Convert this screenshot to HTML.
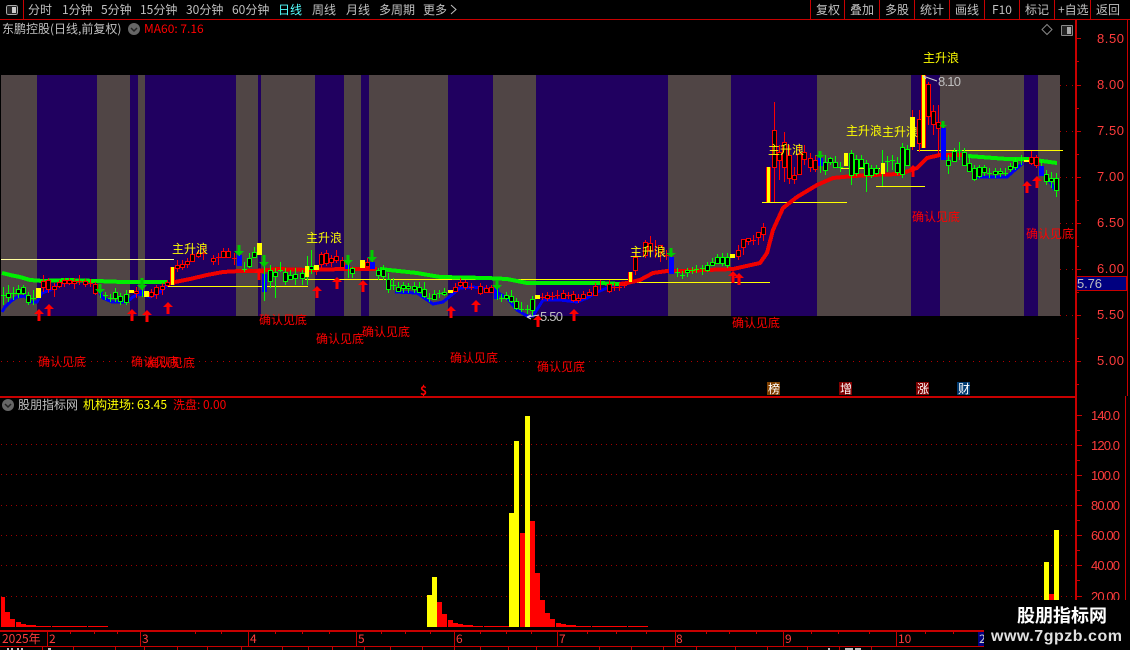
<!DOCTYPE html>
<html><head><meta charset="utf-8"><style>
html,body{margin:0;padding:0;background:#000;overflow:hidden}
svg{display:block}
text{font-family:"WenQuanYi Zen Hei","Noto Sans CJK SC",sans-serif;font-size:12px}
.n{font-family:"Liberation Sans",sans-serif;font-size:13px}
.g{fill:#c0c0c0}.r{fill:#f00}.y{fill:#ff0}.a{fill:#ff3c3c}
</style></head><body>
<svg width="1130" height="650" viewBox="0 0 1130 650" xmlns="http://www.w3.org/2000/svg">
<rect width="1130" height="650" fill="#000"/>
<g shape-rendering="crispEdges">
<path fill="#504545" d="M1 75H37V316H1zM97 75H130V316H97zM138 75H145V316H138zM236 75H258V316H236zM261 75H315V316H261zM344 75H361V316H344zM369 75H448V316H369zM493 75H536V316H493zM668 75H731V316H668zM817 75H911V316H817zM940 75H1024V316H940zM1038 75H1060V316H1038z"/>
<path fill="#200060" d="M37 75H97V316H37zM130 75H138V316H130zM145 75H236V316H145zM258 75H261V316H258zM315 75H344V316H315zM361 75H369V316H361zM448 75H493V316H448zM536 75H668V316H536zM731 75H817V316H731zM911 75H940V316H911zM1024 75H1038V316H1024z"/>
<path stroke="#b00000" stroke-dasharray="1 5" fill="none" d="M1 361.5H1075M1060 85.5H1075M1060 131.5H1075M1060 177.5H1075M1060 223.5H1075M1060 269.5H1075M1060 315.5H1075"/>
<path stroke="#a00000" stroke-dasharray="1 4" fill="none" d="M1 444.5H1075M1 474.5H1075M1 505.5H1075M1 535.5H1075M1 565.5H1075M1 596.5H1075"/>
<path stroke="#c80000" fill="none" d="M0 19.5H1130M23.5 0V20M810.5 0V20M844.5 0V20M879.5 0V20M914.5 0V20M949.5 0V20M984.5 0V20M1019.5 0V20M1054.5 0V20M1090.5 0V20"/>
<path stroke="#c80000" stroke-width="2" fill="none" d="M0 397H1076M1076 20V630M0 631H1076"/>
<path stroke="#c80000" fill="none" d="M1127.5 20V396M1125.5 396V630M1076 38.5h5M1076 61.5h3M1076 85.5h5M1076 108.5h3M1076 131.5h5M1076 154.5h3M1076 177.5h5M1076 200.5h3M1076 223.5h5M1076 246.5h3M1076 269.5h5M1076 292.5h3M1076 315.5h5M1076 338.5h3M1076 361.5h5M1076 384.5h3M1077 415.5h5M1077 430.5h3M1077 445.5h5M1077 460.5h3M1077 475.5h5M1077 490.5h3M1077 505.5h5M1077 520.5h3M1077 535.5h5M1077 550.5h3M1077 565.5h5M1077 580.5h3M1077 596.5h5"/>
<path stroke="#c80000" fill="none" d="M0 646.5H1130M47.5 630V646M140.5 630V646M248.5 630V646M356.5 630V646M454.5 630V646M557.5 630V646M675.5 630V646M783.5 630V646M896.5 630V646M978.5 630V646M70.5 631v3M94.5 631v3M117.5 631v3M195.5 631v3M221.5 631v3M275.5 631v3M302.5 631v3M329.5 631v3M381.5 631v3M405.5 631v3M430.5 631v3M480.5 631v3M506.5 631v3M531.5 631v3M587.5 631v3M616.5 631v3M646.5 631v3M587.5 631v3M706.5 631v3M729.5 631v3M756.5 631v3M811.5 631v3M838.5 631v3M869.5 631v3M925.5 631v3M953.5 631v3M42.5 646v4M73.5 646v4M115.5 646v4M144.5 646v4M177.5 646v4M207.5 646v4M241.5 646v4M282.5 646v4M308.5 646v4M332.5 646v4M364.5 646v4M390.5 646v4M422.5 646v4M454.5 646v4M480.5 646v4M508.5 646v4M536.5 646v4M599.5 646v4M631.5 646v4M663.5 646v4M696.5 646v4M735.5 646v4M767.5 646v4M807.5 646v4M839.5 646v4M871.5 646v4"/>
<rect x="978" y="632" width="6" height="14" fill="#000080"/>
<path fill="#c0c0c0" d="M7 648h2v2H7zM11 648h2v2h-2zM17 648h2v2h-2zM21 648h2v2h-2zM48 648h3v2h-3zM828 648h2v2h-2zM845 648h8v2h-8zM855 648h6v2h-6z"/>
<path fill="#ff0" d="M427 595h5v32h-5zM432 577h5v50h-5zM509 513h5v114h-5zM514 441h5v186h-5zM525 416h5v211h-5zM1044 562h5v65h-5zM1054 530h5v97h-5z"/>
<path fill="#f00" d="M437 602h5v25h-5zM442 614h5v13h-5zM448 620h5v7h-5zM453 623h5v4h-5zM458 624h5v3h-5zM463 625h10v2h-10zM473 626h10v1h-10zM484 626h25v1h-25zM520 533h5v94h-5zM530 521h5v106h-5zM535 573h5v54h-5zM540 600h5v27h-5zM545 613h5v14h-5zM550 619h5v8h-5zM556 623h5v4h-5zM561 624h5v3h-5zM566 625h10v2h-10zM576 626h15v1h-15zM592 626h35v1h-35zM628 626h20v1h-20zM1049 594h5v33h-5zM1 597h4v30H1zM5 612h5v15H5zM10 619h5v8h-5zM16 622h5v5h-5zM21 624h5v3h-5zM26 625h10v2H26zM36 626h15v1H36zM52 626h35v1H52zM88 626h20v1H88z"/>
<path stroke="#ffffa0" fill="none" d="M1 259.5H174"/>
<path stroke="#ff0" fill="none" d="M167 286.5H308M305 279.5H630M624 282.5H770M762 202.5H847M917 150.5H1063M876 186.5H925M840 168.5H880M300 286.5h7"/>
</g>
<g fill="none" stroke-width="4" shape-rendering="crispEdges">
<path stroke="#0000f0" stroke-width="3" d="M2 312L5 307L10 302L17 297L25 296L30 302L37 302L42 293L50 290L58 285L65 282M98 290L103 298L112 302L127 302L133 297L140 293L150 297L160 292L167 285M395 292L417 293L433 304L443 302L460 288L473 287L493 290L507 298L517 310L527 316L533 316L543 300L560 300L577 302L587 298L597 292L607 288L620 283M977 177L1007 177L1023 163M1045 176L1050 182L1055 190"/>
<path stroke="#00f000" d="M2 273L10 275L20 277L30 280L43 281L67 280L97 281L123 282L167 282M380 269L417 273L440 277L487 278L507 279L527 283L600 283L620 284M968 156L1007 159L1027 159L1057 163"/>
<path stroke="#f00000" d="M175 282L190 279L207 275L223 272L240 271L257 271L277 269L310 270L343 269L377 269M620 284L627 283L640 280L653 273L667 271L680 271L707 270L733 269L760 263L767 253L773 230L783 208L797 197L817 185L833 178L853 176L870 175L900 174L917 168L927 158L940 155L966 155"/>
</g>
<g shape-rendering="crispEdges">
<path fill="#00f" d="M262 274h5v18h-5zM237 255h5v11h-5zM98 290h5v3h-5zM139 290h5v6h-5zM345 265h5v4h-5zM370 262h5v7h-5zM494 287h5v12h-5zM669 257h5v17h-5zM818 158h5v8h-5zM941 128h5v32h-5zM1039 166h5v10h-5z"/>
<path fill="none" stroke="#0f0" d="M3.5 287V305M1 295.5h5M8.5 285V302M13.5 287V300M11 293.5h5M18.5 285V298M23.5 285V295M28.5 292V305M33.5 290V305M31 298.5h5M100.5 285V298M142.5 278V297M105.5 292V300M103 295.5h5M110.5 294V302M108 298.5h5M115.5 288V302M120.5 293V305M126.5 290V305M239.5 245V256M244.5 262V272M242 269.5h5M249.5 253V268M254.5 247V258M264.5 255V301M270.5 265V288M275.5 268V298M280.5 262V272M278 270.5h5M285.5 268V285M290.5 270V280M295.5 268V285M302.5 270V285M307.5 256V285M311.5 250V274M348.5 255V278M352.5 267V278M372.5 250V262M378.5 268V280M383.5 265V280M388.5 273V293M393.5 278V290M391 285.5h5M398.5 282V292M403.5 282V293M408.5 283V293M414.5 282V293M419.5 282V293M424.5 282V298M429.5 293V302M427 298.5h5M434.5 290V300M439.5 290V298M437 293.5h5M444.5 288V296M497.5 280V300M501.5 294V302M499 298.5h5M506.5 292V300M511.5 290V303M516.5 298V310M521.5 302V312M519 309.5h5M527.5 305V314M525 309.5h5M532.5 296V316M671.5 248V257M677.5 268V277M675 272.5h5M682.5 271V279M680 275.5h5M687.5 268V277M692.5 267V274M690 270.5h5M696.5 265V273M694 269.5h5M702.5 265V275M700 268.5h5M707.5 262V272M712.5 258V266M717.5 254V264M722.5 253V266M727.5 253V268M820.5 151V173M825.5 155V175M830.5 157V165M835.5 156V168M840.5 162V172M838 167.5h5M851.5 150V185M856.5 155V176M861.5 155V168M866.5 160V192M871.5 165V178M876.5 165V175M882.5 150V186M887.5 156V172M885 161.5h5M892.5 155V170M890 160.5h5M897.5 157V175M902.5 143V178M907.5 145V166M943.5 121V128M948.5 155V174M954.5 148V162M959.5 142V160M957 150.5h5M964.5 148V165M969.5 155V172M974.5 165V181M979.5 165V178M984.5 165V176M989.5 168V178M987 173.5h5M995.5 168V178M1000.5 168V177M1005.5 168V176M1003 173.5h5M1010.5 163V172M1015.5 158V170M1021.5 155V165M1019 160.5h5M1041.5 160V166M1046.5 170V185M1051.5 172V188M1056.5 173V197"/>
<path fill="#000" stroke="#0f0" d="M6.5 293.5h4v4h-4zM16.5 289.5h4v4h-4zM21.5 287.5h4v6h-4zM26.5 295.5h4v7h-4zM113.5 292.5h4v6h-4zM118.5 296.5h4v5h-4zM124.5 294.5h4v8h-4zM247.5 258.5h4v8h-4zM252.5 252.5h4v5h-4zM268.5 270.5h4v11h-4zM273.5 272.5h4v4h-4zM283.5 272.5h4v9h-4zM288.5 275.5h4v4h-4zM293.5 274.5h4v4h-4zM300.5 273.5h4v5h-4zM309.5 266.5h4v3h-4zM350.5 268.5h4v5h-4zM376.5 270.5h4v5h-4zM381.5 269.5h4v7h-4zM386.5 279.5h4v10h-4zM396.5 287.5h4v4h-4zM401.5 285.5h4v3h-4zM406.5 286.5h4v2h-4zM412.5 286.5h4v3h-4zM417.5 287.5h4v5h-4zM422.5 289.5h4v7h-4zM432.5 294.5h4v5h-4zM442.5 292.5h4v2h-4zM504.5 295.5h4v3h-4zM509.5 296.5h4v5h-4zM514.5 301.5h4v7h-4zM530.5 299.5h4v11h-4zM685.5 270.5h4v2h-4zM705.5 265.5h4v5h-4zM710.5 262.5h4v3h-4zM715.5 257.5h4v6h-4zM720.5 257.5h4v6h-4zM725.5 257.5h4v8h-4zM823.5 162.5h4v8h-4zM828.5 158.5h4v4h-4zM833.5 162.5h4v5h-4zM849.5 153.5h4v22h-4zM854.5 159.5h4v14h-4zM859.5 159.5h4v8h-4zM864.5 163.5h4v12h-4zM869.5 168.5h4v7h-4zM874.5 168.5h4v5h-4zM895.5 163.5h4v9h-4zM900.5 147.5h4v27h-4zM905.5 149.5h4v16h-4zM946.5 160.5h4v5h-4zM952.5 151.5h4v10h-4zM962.5 152.5h4v13h-4zM967.5 163.5h4v8h-4zM972.5 168.5h4v11h-4zM977.5 167.5h4v9h-4zM982.5 167.5h4v5h-4zM993.5 171.5h4v3h-4zM998.5 171.5h4v2h-4zM1008.5 166.5h4v3h-4zM1013.5 161.5h4v6h-4zM1044.5 174.5h4v7h-4zM1049.5 178.5h4v3h-4zM1054.5 178.5h4v12h-4z"/>
<path fill="none" stroke="#f00" d="M43.5 275V292M48.5 278V293M54.5 283V297M59.5 280V288M64.5 278V287M69.5 278V285M74.5 278V289M79.5 275V285M77 281.5h5M85.5 279V287M90.5 279V287M88 283.5h5M95.5 282V295M136.5 287V298M151.5 289V298M156.5 285V299M162.5 283V295M167.5 280V287M177.5 260V272M182.5 260V270M187.5 258V268M192.5 251V262M198.5 250V258M203.5 247V260M201 253.5h5M213.5 255V265M218.5 253V265M216 257.5h5M223.5 248V258M228.5 248V258M234.5 253V265M232 258.5h5M316.5 265V275M321.5 252V268M326.5 250V266M331.5 255V267M336.5 250V263M342.5 257V268M367.5 258V268M455.5 283V292M460.5 278V287M465.5 280V290M471.5 283V290M469 287.5h5M480.5 283V295M486.5 285V293M491.5 285V292M542.5 293V300M540 297.5h5M547.5 292V301M552.5 292V300M550 296.5h5M557.5 290V299M555 295.5h5M563.5 290V299M568.5 292V299M566 295.5h5M573.5 291V302M578.5 294V303M583.5 291V298M589.5 289V296M595.5 283V296M600.5 280V290M609.5 280V293M614.5 283V291M612 287.5h5M619.5 283V291M617 287.5h5M624.5 282V288M622 285.5h5M635.5 252V275M645.5 240V258M650.5 236V255M655.5 240V258M660.5 245V262M666.5 250V260M664 255.5h5M738.5 245V260M743.5 239V255M748.5 238V245M753.5 235V245M751 240.5h5M758.5 232V245M763.5 223V241M774.5 102V202M779.5 145V180M784.5 132V182M789.5 145V184M794.5 167V184M799.5 145V175M804.5 145V165M810.5 153V172M815.5 155V172M912.5 110V150M919.5 110V152M928.5 82V125M933.5 105V135M938.5 105V155M1031.5 151V165M1036.5 155V168"/>
<path fill="#000" stroke="#f00" d="M41.5 281.5h4v6h-4zM46.5 280.5h4v9h-4zM52.5 286.5h4v3h-4zM57.5 282.5h4v4h-4zM62.5 280.5h4v3h-4zM67.5 280.5h4v3h-4zM72.5 281.5h4v2h-4zM83.5 281.5h4v3h-4zM93.5 284.5h4v9h-4zM134.5 291.5h4v2h-4zM149.5 292.5h4v4h-4zM154.5 287.5h4v7h-4zM160.5 286.5h4v3h-4zM165.5 282.5h4v3h-4zM175.5 265.5h4v3h-4zM180.5 264.5h4v3h-4zM185.5 261.5h4v3h-4zM190.5 254.5h4v7h-4zM196.5 253.5h4v3h-4zM211.5 258.5h4v3h-4zM221.5 251.5h4v6h-4zM226.5 251.5h4v6h-4zM319.5 254.5h4v10h-4zM324.5 253.5h4v10h-4zM329.5 258.5h4v4h-4zM334.5 256.5h4v4h-4zM340.5 260.5h4v7h-4zM365.5 262.5h4v4h-4zM453.5 287.5h4v4h-4zM458.5 282.5h4v3h-4zM463.5 282.5h4v5h-4zM478.5 286.5h4v7h-4zM484.5 288.5h4v4h-4zM489.5 287.5h4v5h-4zM545.5 295.5h4v3h-4zM561.5 293.5h4v5h-4zM571.5 294.5h4v6h-4zM576.5 298.5h4v2h-4zM581.5 294.5h4v4h-4zM587.5 292.5h4v3h-4zM593.5 286.5h4v9h-4zM607.5 284.5h4v7h-4zM633.5 257.5h4v13h-4zM643.5 242.5h4v13h-4zM648.5 243.5h4v7h-4zM658.5 245.5h4v7h-4zM736.5 250.5h4v6h-4zM741.5 239.5h4v8h-4zM746.5 238.5h4v3h-4zM756.5 232.5h4v5h-4zM761.5 227.5h4v7h-4zM772.5 130.5h4v37h-4zM777.5 152.5h4v8h-4zM782.5 142.5h4v25h-4zM787.5 155.5h4v23h-4zM792.5 175.5h4v4h-4zM797.5 154.5h4v20h-4zM802.5 152.5h4v7h-4zM808.5 158.5h4v9h-4zM813.5 160.5h4v9h-4zM917.5 119.5h4v24h-4zM926.5 84.5h4v32h-4zM931.5 111.5h4v13h-4zM936.5 122.5h4v6h-4zM1029.5 157.5h4v6h-4zM1034.5 157.5h4v8h-4z"/>
<path fill="#ff0" d="M36 288h5v10h-5zM129 290h5v3h-5zM144 291h5v6h-5zM257 243h5v12h-5zM305 266h4v11h-4zM314 265h5v5h-5zM360 260h5v8h-5zM448 290h5v3h-5zM535 295h5v4h-5zM730 254h5v4h-5zM844 153h4v13h-4zM881 163h4v11h-4zM910 117h5v30h-5zM1024 160h5v2h-5z"/>
<path fill="#f00" d="M170 267h5v18h-5zM628 272h5v10h-5zM766 167h5v35h-5zM921 75h5v73h-5z"/>
<path fill="#ff0" d="M171 267h3v18h-3zM629 272h3v10h-3zM767 167h3v35h-3zM922 75h3v73h-3z"/>
</g>
<g fill="#f00">
<path d="M39 309l5 5h-3.500v7h-3v-7H34zM49 304l5 5h-3.500v7h-3v-7H44zM132 309l5 5h-3.500v7h-3v-7H127zM147 310l5 5h-3.500v7h-3v-7H142zM168 302l5 5h-3.500v7h-3v-7H163zM259 268l5 5h-3.500v7h-3v-7H254zM317 286l5 5h-3.500v7h-3v-7H312zM337 277l5 5h-3.500v7h-3v-7H332zM363 280l5 5h-3.500v7h-3v-7H358zM451 306l5 5h-3.500v7h-3v-7H446zM476 300l5 5h-3.500v7h-3v-7H471zM538 315l5 5h-3.500v7h-3v-7H533zM574 309l5 5h-3.500v7h-3v-7H569zM733 271l5 5h-3.500v7h-3v-7H728zM739 273l5 5h-3.500v7h-3v-7H734zM913 165l5 5h-3.500v7h-3v-7H908zM1027 181l5 5h-3.500v7h-3v-7H1022zM1037 176l5 5h-3.500v7h-3v-7H1032z"/>
</g>
<g fill="#0c0">
<path d="M100 294l-5-5h3.500v-5h3v5H105zM142 290l-5-5h3.500v-7h3v7H147zM239 256l-5-5h3.500v-6h3v6H244zM264 267l-5-5h3.500v-7h3v7H269zM348 265l-5-5h3.500v-5h3v5H353zM372 262l-5-5h3.500v-7h3v7H377zM497 290l-5-5h3.500v-5h3v5H502zM671 257l-5-4h3.500v-5h3v5H676zM820 158l-5-3h3.500v-4h3v4H825zM943 128l-4-3h2.500v-4h3v4H947z"/>
</g>
<path d="M527 317L539 315M527 317l4-2M527 317l4 2M923 76L937 81M923 76l3 3" stroke="#d0d0d0" fill="none"/>
<text x="38" y="366" class="r">确认见底</text><text x="131" y="366" class="r">确认见底</text><text x="147" y="367" class="r">确认见底</text><text x="259" y="324" class="r">确认见底</text><text x="316" y="343" class="r">确认见底</text><text x="362" y="336" class="r">确认见底</text><text x="450" y="362" class="r">确认见底</text><text x="537" y="371" class="r">确认见底</text><text x="732" y="327" class="r">确认见底</text><text x="912" y="221" class="r">确认见底</text><text x="1026" y="238" class="r">确认见底</text>
<text x="172" y="253" class="y">主升浪</text><text x="306" y="242" class="y">主升浪</text><text x="630" y="256" class="y">主升浪</text><text x="768" y="154" class="y">主升浪</text><text x="846" y="135" class="y">主升浪</text><text x="882" y="136" class="y">主升浪</text><text x="923" y="62" class="y">主升浪</text>
<text x="540" y="321" class="n g" textLength="23">5.50</text><text x="938" y="86" class="n g" textLength="23">8.10</text>
<text x="28" y="14" class="g">分时</text><text x="62" y="14" class="g">1分钟</text><text x="101" y="14" class="g">5分钟</text><text x="140" y="14" class="g">15分钟</text><text x="186" y="14" class="g">30分钟</text><text x="232" y="14" class="g">60分钟</text><text x="278" y="14" fill="#5ff">日线</text><text x="312" y="14" class="g">周线</text><text x="346" y="14" class="g">月线</text><text x="379" y="14" class="g">多周期</text><text x="423" y="14" class="g">更多</text>
<path d="M451 5l5 4.500-5 4.500" fill="none" stroke="#c0c0c0"/>
<text x="816" y="14" class="g">复权</text><text x="850" y="14" class="g">叠加</text><text x="885" y="14" class="g">多股</text><text x="920" y="14" class="g">统计</text><text x="955" y="14" class="g">画线</text><text x="992" y="14" class="g">F10</text><text x="1025" y="14" class="g">标记</text><text x="1058" y="14" class="g">+自选</text><text x="1096" y="14" class="g">返回</text>
<g shape-rendering="crispEdges"><rect x="6.500" y="5.500" width="11" height="9" rx="2" fill="#222" stroke="#aaa"/><rect x="12" y="7" width="4" height="6" fill="#ccc"/><rect x="1061.500" y="25.500" width="11" height="10" rx="1" fill="#222" stroke="#888"/><rect x="1067" y="27" width="4" height="7" fill="#aaa"/></g>
<text x="2" y="33" class="g">东鹏控股(日线,前复权)</text>
<circle cx="134" cy="29" r="6" fill="#666"/><path d="M131 28l3 3 3-3" fill="none" stroke="#222" stroke-width="1.500"/>
<text x="144" y="33" class="r">MA60: 7.16</text>
<path d="M1047 24.500l5 5-5 5-5-5z" fill="none" stroke="#888"/>
<text class="n a" x="1097" y="43" textLength="27">8.50</text><text class="n a" x="1097" y="89" textLength="27">8.00</text><text class="n a" x="1097" y="135" textLength="27">7.50</text><text class="n a" x="1097" y="181" textLength="27">7.00</text><text class="n a" x="1097" y="227" textLength="27">6.50</text><text class="n a" x="1097" y="273" textLength="27">6.00</text><text class="n a" x="1097" y="319" textLength="27">5.50</text><text class="n a" x="1097" y="365" textLength="27">5.00</text>
<rect x="1076.500" y="276.500" width="50" height="14" fill="#000080" stroke="#c80000" shape-rendering="crispEdges"/><text class="n g" x="1077" y="288" textLength="25">5.76</text>
<text x="420" y="395" fill="#f00" style="font-weight:bold">$</text>
<g shape-rendering="crispEdges"><rect x="767" y="382" width="13" height="13" fill="#804000"/><rect x="839" y="382" width="13" height="13" fill="#800000"/><rect x="916" y="382" width="13" height="13" fill="#800000"/><rect x="957" y="382" width="13" height="13" fill="#003a70"/></g>
<text x="768" y="393" fill="#fff">榜</text><text x="840" y="393" fill="#fff">增</text><text x="917" y="393" fill="#fff">涨</text><text x="958" y="393" fill="#fff">财</text>
<circle cx="8" cy="405" r="6" fill="#666"/><path d="M5 404l3 3 3-3" fill="none" stroke="#222" stroke-width="1.500"/>
<text x="18" y="409" class="g">股朋指标网</text><text x="83" y="409" class="y">机构进场: 63.45</text><text x="173" y="409" class="r">洗盘: 0.00</text>
<text class="n a" x="1091" y="420" textLength="29">140.0</text><text class="n a" x="1091" y="450" textLength="29">120.0</text><text class="n a" x="1091" y="480" textLength="29">100.0</text><text class="n a" x="1091" y="510" textLength="29">80.00</text><text class="n a" x="1091" y="540" textLength="29">60.00</text><text class="n a" x="1091" y="570" textLength="29">40.00</text><text class="n a" x="1091" y="601" textLength="29">20.00</text>
<text class="a" x="2" y="643">2025年</text><text class="a" x="49" y="643">2</text><text class="a" x="142" y="643">3</text><text class="a" x="250" y="643">4</text><text class="a" x="358" y="643">5</text><text class="a" x="456" y="643">6</text><text class="a" x="559" y="643">7</text><text class="a" x="676" y="643">8</text><text class="a" x="785" y="643">9</text><text class="a" x="898" y="643">10</text>
<rect x="984" y="600" width="146" height="50" fill="#000"/>
<text x="979" y="643" fill="#ccc">2</text>
<rect x="984" y="630" width="6" height="20" fill="#000"/>
<text x="1017" y="622" fill="#fff" style="font-family:'Noto Sans CJK SC',sans-serif;font-size:18px;font-weight:bold">股朋指标网</text>
<text x="991" y="641" fill="#e0e0e0" textLength="131" style="font-family:'Liberation Sans',sans-serif;font-size:16px;font-weight:bold">www.7gpzb.com</text>
</svg>
</body></html>
